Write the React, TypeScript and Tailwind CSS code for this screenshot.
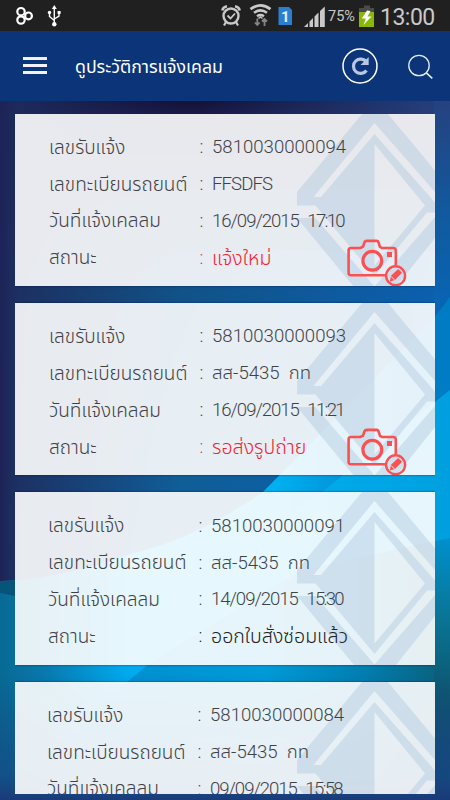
import React from 'react';

interface Claim {
  id: string;
  plate: string;
  plateTracking: string;
  date: string;
  time: string;
  status: string;
  pending: boolean;
  labelPad: string;
}

const claims: Claim[] = [
  {
    id: '5810030000094',
    plate: 'FFSDFS',
    plateTracking: 'tracking-[-0.9px]',
    date: '16/09/2015',
    time: '17:10',
    status: 'แจ้งใหม่',
    pending: true,
    labelPad: 'pl-[34px]',
  },
  {
    id: '5810030000093',
    plate: 'สส-5435  กท',
    plateTracking: 'tracking-[0px]',
    date: '16/09/2015',
    time: '11:21',
    status: 'รอส่งรูปถ่าย',
    pending: true,
    labelPad: 'pl-[34px]',
  },
  {
    id: '5810030000091',
    plate: 'สส-5435  กท',
    plateTracking: 'tracking-[0px]',
    date: '14/09/2015',
    time: '15:30',
    status: 'ออกใบสั่งซ่อมแล้ว',
    pending: false,
    labelPad: 'pl-[33px]',
  },
  {
    id: '5810030000084',
    plate: 'สส-5435  กท',
    plateTracking: 'tracking-[0px]',
    date: '09/09/2015',
    time: '15:58',
    status: 'ออกใบสั่งซ่อมแล้ว',
    pending: false,
    labelPad: 'pl-[32px]',
  },
];

function Wallpaper() {
  return (
    <svg className="absolute inset-0 w-full h-full" viewBox="0 0 450 699" preserveAspectRatio="none">
      <defs>
        <linearGradient id="night" x1="0" y1="0" x2="0" y2="1">
          <stop offset="0" stopColor="#13123a" />
          <stop offset="0.02" stopColor="#191a48" />
          <stop offset="0.27" stopColor="#115287" />
          <stop offset="0.6" stopColor="#0f609b" />
          <stop offset="1" stopColor="#0a62b4" />
        </linearGradient>
        <linearGradient id="leftShade" x1="0" y1="0" x2="1" y2="0">
          <stop offset="0" stopColor="#1d2356" />
          <stop offset="0.04" stopColor="#1e2c5e" stopOpacity="0.9" />
          <stop offset="0.4" stopColor="#1e2a5c" stopOpacity="0" />
        </linearGradient>
        <linearGradient id="rightSide" x1="0" y1="0" x2="1" y2="0">
          <stop offset="0.4" stopColor="#0a62b4" stopOpacity="0" />
          <stop offset="1" stopColor="#0a62b4" stopOpacity="0.9" />
        </linearGradient>
        <linearGradient id="topGlow" x1="0" y1="0" x2="1" y2="0">
          <stop offset="0.45" stopColor="#26417f" stopOpacity="0" />
          <stop offset="1" stopColor="#26417f" />
        </linearGradient>
        <linearGradient id="rightGlow" x1="0" y1="0" x2="0" y2="1">
          <stop offset="0" stopColor="#26417f" />
          <stop offset="0.45" stopColor="#12589c" />
          <stop offset="1" stopColor="#0668b9" />
        </linearGradient>
        <linearGradient id="wave" x1="0" y1="0" x2="1" y2="0">
          <stop offset="0" stopColor="#086a94" />
          <stop offset="0.1" stopColor="#0879ae" />
          <stop offset="0.28" stopColor="#00aaee" />
          <stop offset="0.6" stopColor="#00b2f2" />
          <stop offset="0.9" stopColor="#007cc4" />
        </linearGradient>
        <linearGradient id="cyan" x1="0" y1="0" x2="1" y2="0">
          <stop offset="0" stopColor="#00b4f2" />
          <stop offset="1" stopColor="#00a0e0" />
        </linearGradient>
        <linearGradient id="waveFront" x1="0" y1="0" x2="1" y2="0">
          <stop offset="0.2" stopColor="#0092d2" />
          <stop offset="0.5" stopColor="#009bd8" />
          <stop offset="0.75" stopColor="#0080b4" />
          <stop offset="1" stopColor="#0b5f78" />
        </linearGradient>
        <linearGradient id="rightDusk" x1="0" y1="0" x2="0" y2="1">
          <stop offset="0" stopColor="#0090ce" />
          <stop offset="0.3" stopColor="#0a7596" />
          <stop offset="0.6" stopColor="#0d5670" />
          <stop offset="1" stopColor="#17457c" />
        </linearGradient>
        <linearGradient id="deep" x1="0" y1="0" x2="0" y2="1">
          <stop offset="0.2" stopColor="#16417c" stopOpacity="0" />
          <stop offset="0.85" stopColor="#164782" stopOpacity="0.75" />
          <stop offset="1" stopColor="#1a3a78" />
        </linearGradient>
      </defs>
      <rect width="450" height="699" fill="url(#night)" />
      <rect y="150" width="450" height="350" fill="url(#rightSide)" />
      <rect width="450" height="500" fill="url(#leftShade)" />
      <rect width="450" height="14" fill="url(#topGlow)" />
      <rect x="434" width="16" height="230" fill="url(#rightGlow)" />
      <path d="M450 196 L434 217 L262 392 Q190 440 133 452 Q60 478 0 480 V699 H450Z" fill="url(#wave)" />
      <path d="M450 289 L322 391 L200 470 H450Z" fill="url(#cyan)" />
      <path d="M0 480 H15 V495 L0 492Z" fill="#07547a" />
      <path d="M434 440 L300 470 L150 562 L127 581 L80 620 V699 H450 V440Z" fill="url(#waveFront)" />
      <path d="M434 440 L450 437 V699 H434Z" fill="url(#rightDusk)" />
      <rect y="540" width="450" height="159" fill="url(#deep)" />
    </svg>
  );
}

function Emblem() {
  return (
    <svg
      className="absolute top-0 right-0 w-[138px] h-[173px]"
      viewBox="0 0 138 173"
      fill="#a9c3dc"
      fillOpacity="0.4"
      fillRule="evenodd"
    >
      <path d="M65 0 H91 L138 56.5 V98.5 H130 L77.5 162 L18.5 91.5 H0 V78Z M16.5 83 L77.5 9 L138 78 V88.5 L77.5 20 L24 83Z M77.5 30 L128 91.5 L77.5 151.5Z" />
      <path d="M0 104 H18.5 L77.5 172.5 L138 103 V124 L99 173 H57Z" />
    </svg>
  );
}

function CameraEdit() {
  return (
    <svg className="absolute left-[332px] top-[125px] w-[60px] h-[48px]" viewBox="0 0 60 48" fill="none" stroke="#fb5052">
      <path d="M39 36.3 H3.8 Q1.6 36.3 1.6 34 V11.2 Q1.6 9 3.8 9 H13.5 L16 7.6 L17.6 3 Q18 1.9 19.5 1.9 H29.5 Q31 1.9 31.4 3 L33 7.8 L35 9 H46 Q48.8 9 48.8 11.5 V26" strokeWidth="2.6" />
      <circle cx="25.3" cy="21.8" r="9.4" strokeWidth="3.2" />
      <rect x="40" y="13" width="5" height="5" fill="#fb5052" stroke="none" />
      <circle cx="48.6" cy="36.8" r="9.5" strokeWidth="2.4" />
      <path d="M42.8 42.4 L44 36.8 L51.2 30 L55 33.8 L48 41 Z" fill="#fb5052" stroke="none" />
      <path d="M44 37.4 L47.6 41" stroke="#eef3f8" strokeWidth="0.9" />
    </svg>
  );
}

interface RowProps {
  label: string;
  labelPad: string;
  color?: string;
  children: React.ReactNode;
}

function Row({ label, labelPad, color = 'text-[#3f4245]', children }: RowProps) {
  return (
    <div className={`flex h-[36.8px] items-center whitespace-pre ${labelPad} ${color}`}>
      <span className="w-[150.5px] shrink-0 text-[19px] text-[#3f4245]">{label}</span>
      <span className="w-[12.5px] shrink-0">:</span>
      <span>{children}</span>
    </div>
  );
}

function ClaimCard({ claim }: { claim: Claim }) {
  const statusColor = claim.pending ? 'text-[#f5222f]' : 'text-[#222222]';
  return (
    <div className="relative h-[172.5px] shrink-0 overflow-hidden bg-white/90 pt-[16px] text-[18.6px] font-light shadow-[0_0_2px_rgba(0,10,60,0.6)]">
      <Emblem />
      <div className="relative">
        <Row label="เลขรับแจ้ง" labelPad={claim.labelPad}>{claim.id}</Row>
        <Row label="เลขทะเบียนรถยนต์" labelPad={claim.labelPad}>
          <span className={claim.plateTracking}>{claim.plate}</span>
        </Row>
        <Row label="วันที่แจ้งเคลลม" labelPad={claim.labelPad}>
          <span className="mr-[8.5px] tracking-[-1.05px]">{claim.date}</span>
          <span className="tracking-[-1.7px]">{claim.time}</span>
        </Row>
        <Row label="สถานะ" labelPad={claim.labelPad} color={statusColor}>
          <span className="text-[19.6px]">{claim.status}</span>
        </Row>
      </div>
      {claim.pending && <CameraEdit />}
    </div>
  );
}

function StatusBar() {
  return (
    <div className="flex h-[31px] items-center bg-[#202020] text-[#c9c9c9]">
      <svg className="h-[31px] w-[70px] shrink-0" viewBox="0 0 70 31" fill="none" stroke="#fff">
        <circle cx="21" cy="11.7" r="3.7" strokeWidth="2.2" />
        <circle cx="21" cy="20" r="3.7" strokeWidth="2.2" />
        <circle cx="28.5" cy="15.9" r="3.4" strokeWidth="2.2" />
        <path d="M54.3 8 V24 M49.5 13 V16.5 L54.3 20.5 M59 12.5 V16 L54.3 19" strokeWidth="1.4" />
        <path d="M51.8 9 L54.3 5 L56.8 9Z" fill="#fff" stroke="none" />
        <circle cx="54.3" cy="24.2" r="2.2" fill="#fff" stroke="none" />
        <circle cx="49.5" cy="12.5" r="1.7" fill="#fff" stroke="none" />
        <rect x="57.6" y="11" width="3" height="3" fill="#fff" stroke="none" />
      </svg>
      <svg className="ml-[150px] h-[31px] w-[107px] shrink-0" viewBox="220 0 107 31" fill="none" stroke="#c9c9c9">
        <circle cx="231" cy="16" r="7.5" strokeWidth="2.4" />
        <path d="M227.5 15.5 L230.5 18.5 L235 13.5" strokeWidth="1.8" />
        <path d="M222.3 10.5 Q223 7 227 6.3 M239.7 10.5 Q239 7 235 6.3" strokeWidth="2.6" />
        <path d="M226 22 L224 25.5 M236 22 L238 25.5" strokeWidth="2.2" />
        <path d="M250.5 9.2 Q260.5 1.5 270.5 9.2" strokeWidth="2.8" />
        <path d="M254 12.8 Q260.5 8 267 12.8" strokeWidth="2.5" />
        <path d="M257 16.2 Q260.5 13.8 264 16.2" strokeWidth="2.3" />
        <path d="M258.5 18.5 L260.5 17 L262.5 18.5" strokeWidth="1.5" />
        <path d="M257.3 18.5 V25 M255 22.5 L257.3 25 L259.6 22.5 M264.5 26 V19 M262 21.5 L264.5 19 L267 21.5" stroke="#858585" strokeWidth="1.8" />
        <path d="M278.5 7 H289 L292 10 V25 H278.5Z" fill="#2b7fd2" stroke="none" />
        <text x="281" y="21.5" fontSize="15" fontWeight="700" fill="#e4eefa" stroke="none">1</text>
        <path d="M304 27 L308 23 V27Z M309.5 27 V21.5 L313 18 V27Z M314.5 27 V16.5 L318.5 12.5 V27Z M320 27 V11 L324.8 6.5 V27Z" fill="#c9c9c9" stroke="none" />
      </svg>
      <span className="w-[31px] pl-px pt-[3px] text-[14.5px] leading-none">75%</span>
      <svg className="h-[31px] w-[18px] shrink-0" viewBox="357 0 18 31">
        <path d="M363 5.5 H369 V8 H373 V12 H358 V8 H363Z" fill="#4a4a4a" />
        <path d="M358 12 H373 V27 H358Z" fill="#88b808" />
        <path d="M366 10.5 L360.8 18.5 H364.8 L362.5 25 L370.5 16.5 H366.5 L369.5 11Z" fill="#fff" />
      </svg>
      <span className="pl-[4px] pt-[4px] text-[23px] leading-none tracking-[-0.5px]">13:00</span>
    </div>
  );
}

function Header() {
  return (
    <header className="flex h-[70px] items-center bg-[#0b3578] pl-[23px] text-white">
      <div className="flex w-[24px] shrink-0 flex-col gap-[4px] pb-px">
        <div className="h-[3px] bg-[#f5f1fc]" />
        <div className="h-[3px] bg-[#f5f1fc]" />
        <div className="h-[3px] bg-[#f5f1fc]" />
      </div>
      <h1 className="w-[290px] shrink-0 whitespace-nowrap pl-[28px] pt-[4px] text-[17.7px] leading-none">
        ดูประวัติการแจ้งเคลม
      </h1>
      <svg className="h-[70px] w-[100px] shrink-0" viewBox="337 31 100 70" fill="none">
        <circle cx="360" cy="66" r="17" stroke="#fff" strokeWidth="1.5" />
        <path d="M366.5 62 A7.2 7.2 0 1 0 366.5 70.5" stroke="#b9c8e2" strokeWidth="3.2" />
        <path d="M368.7 57 V65 H360.5Z" fill="#b9c8e2" />
        <circle cx="419" cy="65.5" r="10.2" stroke="#e6ecf6" strokeWidth="1.3" />
        <path d="M426.3 72.8 L432.3 78.3" stroke="#e6ecf6" strokeWidth="1.6" />
      </svg>
    </header>
  );
}

export default function App() {
  return (
    <div className="flex h-[800px] w-[450px] flex-col overflow-hidden font-['Roboto','Noto_Sans_Thai','Noto_Sans',sans-serif]">
      <StatusBar />
      <Header />
      <main className="relative h-[699px] bg-[#14123a] px-[15px] pt-[12.7px] pb-[6px]">
        <Wallpaper />
        <div className="relative flex h-full flex-col gap-[16.8px] overflow-hidden">
          {claims.map((claim) => (
            <ClaimCard key={claim.id} claim={claim} />
          ))}
        </div>
      </main>
    </div>
  );
}
